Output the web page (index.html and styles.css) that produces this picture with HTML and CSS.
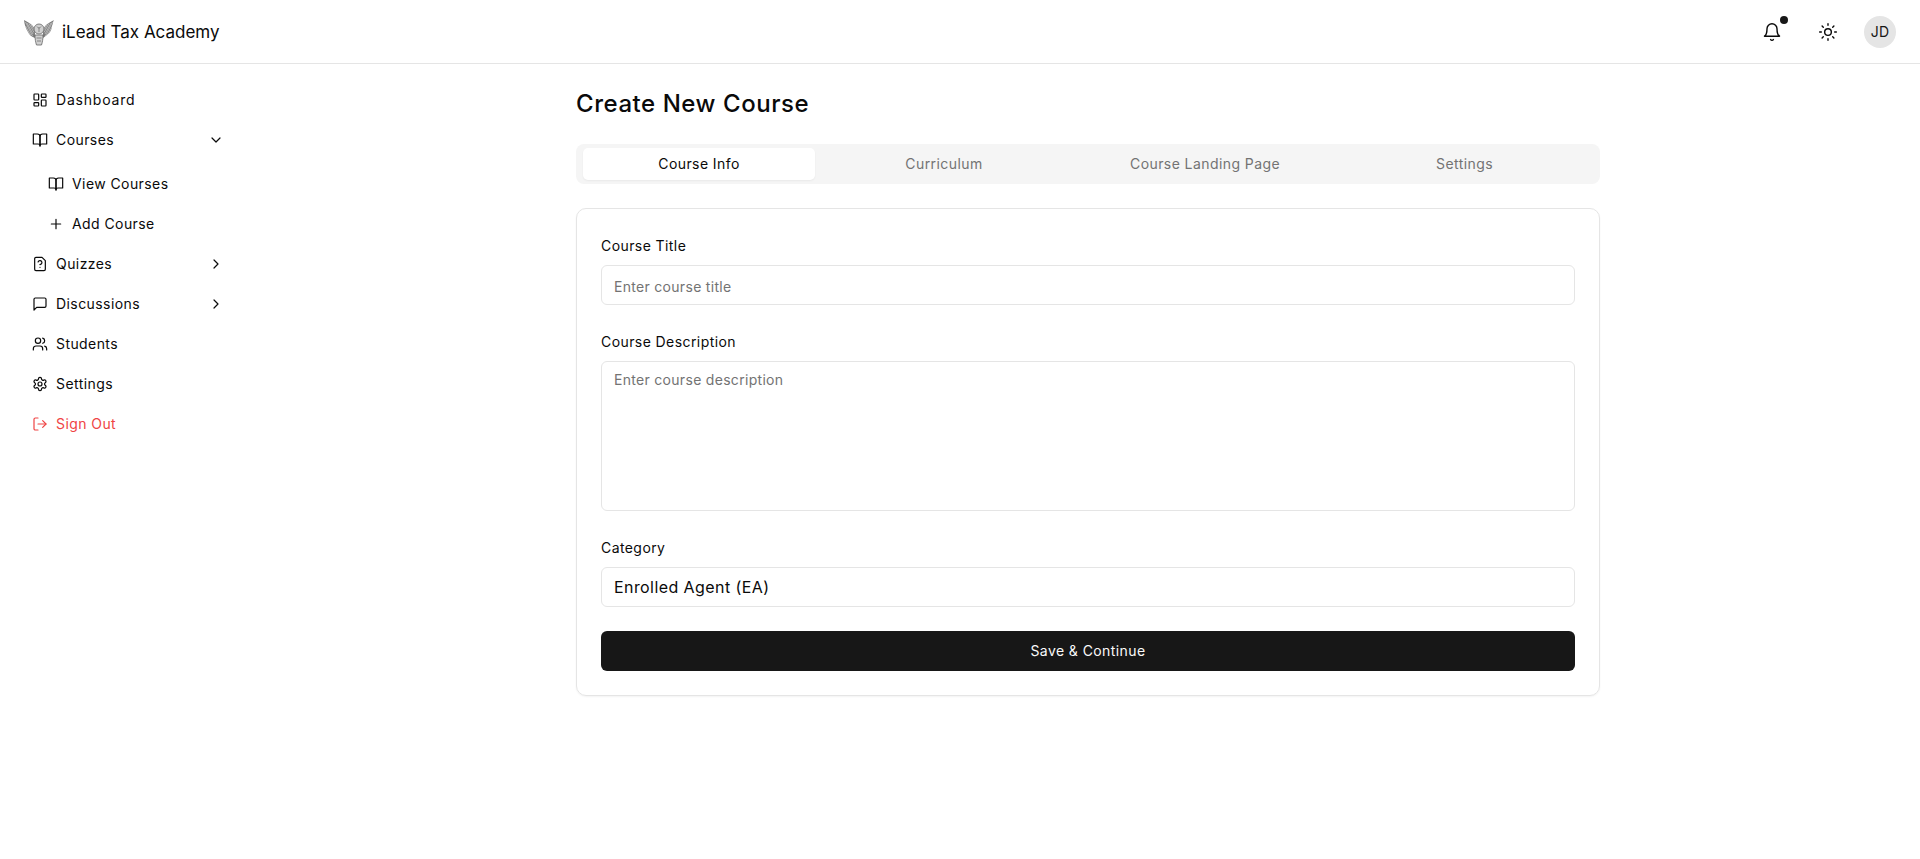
FILE: index.html
```html
<!DOCTYPE html>
<html lang="en">
<head>
<meta charset="utf-8">
<title>Create New Course</title>
<link rel="stylesheet" href="styles.css">
</head>
<body>
<header class="topbar">
  <div class="brand">
    <svg class="logo" viewBox="0 0 30 28" aria-hidden="true">
      <g fill="#7d7d7d">
        <path d="M0 2c3 2 6 3 8 5l3 4v9c-3-1-6-3-7-6C2 11 .5 7 0 2z"/>
        <path d="M30 2c-1 1-1 4-2 6 0 3-2 7-5 9l-4 3v-9l3-4c2-2 5-3 8-5z"/>
      </g>
      <g fill="none" stroke="#fff" stroke-width=".45">
        <path d="M1.500 4l7 14M3 5l6 11M5 5.500l5 9M7 6.500l4 7M1.500 8l5 9"/>
        <path d="M28.500 4l-7 14M27 5l-6 11M25 5.500l-5 9M23 6.500l-4 7M28.500 8l-5 9"/>
      </g>
      <g fill="#d0d0d0" stroke="#666" stroke-width=".8">
        <circle cx="15" cy="11" r="5"/>
        <path d="M11 17c0 4 .5 7 1.500 10h5c1-3 1.500-6 1.500-10z"/>
      </g>
      <g fill="none" stroke="#666" stroke-width=".7">
        <path d="M13 8.500c1 2 3 2 4 0M15 10v4M12.500 20h5M13 23h4"/>
      </g>
    </svg>
    <span class="brand-name">iLead Tax Academy</span>
  </div>
  <div class="top-actions">
    <button class="icon-btn bell" type="button" aria-label="Notifications">
      <svg class="ic20" viewBox="0 0 24 24"><path d="M6 8a6 6 0 0 1 12 0c0 7 3 9 3 9H3s3-2 3-9"/><path d="M10.300 21a1.940 1.940 0 0 0 3.400 0"/></svg>
      <span class="dot"></span>
    </button>
    <button class="icon-btn" type="button" aria-label="Theme">
      <svg class="ic20" viewBox="0 0 24 24"><circle cx="12" cy="12" r="4"/><path d="M12 2v2M12 20v2M4.930 4.930l1.410 1.410M17.660 17.660l1.410 1.410M2 12h2M20 12h2M6.340 17.660l-1.410 1.410M19.070 4.930l-1.410 1.410"/></svg>
    </button>
    <div class="avatar">JD</div>
  </div>
</header>
<div class="shell">
  <nav class="sidebar">
    <a class="nav-item wide"><svg class="ic" viewBox="0 0 24 24"><rect x="3" y="3" width="7" height="9" rx="1"/><rect x="14" y="3" width="7" height="5" rx="1"/><rect x="14" y="12" width="7" height="9" rx="1"/><rect x="3" y="16" width="7" height="5" rx="1"/></svg><span>Dashboard</span></a>
    <a class="nav-item"><svg class="ic" viewBox="0 0 24 24"><path d="M2 3h6a4 4 0 0 1 4 4v14a3 3 0 0 0-3-3H2z"/><path d="M22 3h-6a4 4 0 0 0-4 4v14a3 3 0 0 1 3-3h7z"/></svg><span>Courses</span><svg class="ic chev" viewBox="0 0 24 24"><path d="m6 9 6 6 6-6"/></svg></a>
    <div class="submenu">
      <a class="nav-item"><svg class="ic" viewBox="0 0 24 24"><path d="M2 3h6a4 4 0 0 1 4 4v14a3 3 0 0 0-3-3H2z"/><path d="M22 3h-6a4 4 0 0 0-4 4v14a3 3 0 0 1 3-3h7z"/></svg><span>View Courses</span></a>
      <a class="nav-item"><svg class="ic" viewBox="0 0 24 24"><path d="M5 12h14M12 5v14"/></svg><span>Add Course</span></a>
    </div>
    <a class="nav-item"><svg class="ic" viewBox="0 0 24 24"><path d="M12 17h.01"/><path d="M15 2H6a2 2 0 0 0-2 2v16a2 2 0 0 0 2 2h12a2 2 0 0 0 2-2V7z"/><path d="M9.100 9a3 3 0 0 1 5.820 1c0 2-3 3-3 3"/></svg><span>Quizzes</span><svg class="ic chev" viewBox="0 0 24 24"><path d="m9 18 6-6-6-6"/></svg></a>
    <a class="nav-item"><svg class="ic" viewBox="0 0 24 24"><path d="M21 15a2 2 0 0 1-2 2H7l-4 4V5a2 2 0 0 1 2-2h14a2 2 0 0 1 2 2z"/></svg><span>Discussions</span><svg class="ic chev" viewBox="0 0 24 24"><path d="m9 18 6-6-6-6"/></svg></a>
    <a class="nav-item"><svg class="ic" viewBox="0 0 24 24"><path d="M16 21v-2a4 4 0 0 0-4-4H6a4 4 0 0 0-4 4v2"/><circle cx="9" cy="7" r="4"/><path d="M22 21v-2a4 4 0 0 0-3-3.870"/><path d="M16 3.130a4 4 0 0 1 0 7.750"/></svg><span>Students</span></a>
    <a class="nav-item"><svg class="ic" viewBox="0 0 24 24"><path d="M12.220 2h-.44a2 2 0 0 0-2 2v.18a2 2 0 0 1-1 1.730l-.43.25a2 2 0 0 1-2 0l-.15-.08a2 2 0 0 0-2.730.73l-.22.38a2 2 0 0 0 .73 2.730l.15.1a2 2 0 0 1 1 1.720v.51a2 2 0 0 1-1 1.740l-.15.09a2 2 0 0 0-.73 2.730l.22.38a2 2 0 0 0 2.730.73l.15-.08a2 2 0 0 1 2 0l.43.25a2 2 0 0 1 1 1.730V20a2 2 0 0 0 2 2h.44a2 2 0 0 0 2-2v-.18a2 2 0 0 1 1-1.730l.43-.25a2 2 0 0 1 2 0l.15.08a2 2 0 0 0 2.730-.73l.22-.39a2 2 0 0 0-.73-2.730l-.15-.08a2 2 0 0 1-1-1.740v-.5a2 2 0 0 1 1-1.740l.15-.09a2 2 0 0 0 .73-2.730l-.22-.38a2 2 0 0 0-2.730-.73l-.15.08a2 2 0 0 1-2 0l-.43-.25a2 2 0 0 1-1-1.730V4a2 2 0 0 0-2-2z"/><circle cx="12" cy="12" r="3"/></svg><span>Settings</span></a>
    <a class="nav-item danger"><svg class="ic" viewBox="0 0 24 24"><path d="M9 21H5a2 2 0 0 1-2-2V5a2 2 0 0 1 2-2h4"/><path d="m16 17 5-5-5-5"/><path d="M21 12H9"/></svg><span>Sign Out</span></a>
  </nav>
  <main class="main">
    <div class="content">
      <h1 class="title">Create New Course</h1>
      <div class="tabs">
        <div class="tab active">Course Info</div>
        <div class="tab">Curriculum</div>
        <div class="tab">Course Landing Page</div>
        <div class="tab">Settings</div>
      </div>
      <form class="card">
        <div class="field">
          <label class="label">Course Title</label>
          <input class="control" type="text" placeholder="Enter course title">
        </div>
        <div class="field">
          <label class="label">Course Description</label>
          <textarea class="control area" placeholder="Enter course description"></textarea>
        </div>
        <div class="field">
          <label class="label">Category</label>
          <select class="control select"><option>Enrolled Agent (EA)</option></select>
        </div>
        <button class="save" type="button">Save &amp; Continue</button>
      </form>
    </div>
  </main>
</div>
</body>
</html>
```
FILE: styles.css
```css
* { box-sizing: border-box; }
html, body { margin: 0; height: 100%; }
body {
  font-family: Inter, "Noto Sans", sans-serif;
  color: #0a0a0a;
  background: #fff;
  font-size: 14px;
  letter-spacing: .42px;
}
.topbar {
  height: 64px;
  border-bottom: 1px solid #e5e5e5;
  display: flex;
  align-items: center;
  justify-content: space-between;
  padding: 0 24px;
}
.brand { display: flex; align-items: center; gap: 8px; }
.logo { width: 30px; height: 28px; display: block; }
.brand-name { font-size: 17px; font-weight: 400; line-height: 28px; letter-spacing: 0; }
.top-actions { display: flex; align-items: center; gap: 16px; }
.icon-btn {
  width: 40px;
  height: 40px;
  border: 0;
  background: none;
  padding: 0;
  display: flex;
  align-items: center;
  justify-content: center;
  position: relative;
  color: #0a0a0a;
}
.ic20 { width: 20px; height: 20px; fill: none; stroke: currentColor; stroke-width: 1.700; stroke-linecap: round; stroke-linejoin: round; }
.dot { position: absolute; width: 8px; height: 8px; border-radius: 50%; background: #171717; top: 4px; right: 4px; }
.avatar {
  width: 32px;
  height: 32px;
  border-radius: 50%;
  background: #e5e5e5;
  display: flex;
  align-items: center;
  justify-content: center;
  font-size: 14px;
  font-weight: 400;
  letter-spacing: .2px;
  color: #171717;
}
.shell { display: flex; }
.sidebar { width: 256px; flex: none; padding: 16px; }
.nav-item {
  height: 40px;
  display: flex;
  align-items: center;
  gap: 8px;
  padding: 0 16px;
  font-weight: 400;
  color: #0a0a0a;
}
.nav-item span { padding-bottom: 2px; }
.wide { letter-spacing: .8px; }
.ic { width: 16px; height: 16px; flex: none; fill: none; stroke: currentColor; stroke-width: 1.800; stroke-linecap: round; stroke-linejoin: round; }
.chev { margin-left: auto; }
.submenu { padding: 4px 0 0 16px; }
.danger { color: #ef4444; }
.main { flex: 1; padding: 24px 0; }
.content { width: 1024px; margin: 0 auto; }
.title { margin: 0 0 24px; font-size: 24px; line-height: 32px; font-weight: 500; letter-spacing: .55px; }
.tabs {
  height: 40px;
  background: #f5f5f5;
  border-radius: 8px;
  padding: 4px 8px 4px 7px;
  display: grid;
  grid-template-columns: 232px 258px 264px 1fr;
  margin-bottom: 24px;
}
.tab {
  display: flex;
  align-items: center;
  justify-content: center;
  border-radius: 5px;
  padding-bottom: 2px;
  font-weight: 400;
  color: #737373;
}
.tab.active { background: #fff; color: #0a0a0a; box-shadow: 0 1px 2px rgba(0,0,0,.05); }
.card {
  border: 1px solid #e5e5e5;
  border-radius: 10px;
  padding: 24px;
  box-shadow: 0 1px 2px rgba(0,0,0,.05);
  display: flex;
  flex-direction: column;
  gap: 24px;
}
.field { display: flex; flex-direction: column; gap: 8px; }
.label { font-weight: 400; line-height: 26px; height: 24px; }
.control {
  display: block;
  width: 100%;
  height: 40px;
  border: 1px solid #e5e5e5;
  border-radius: 6px;
  padding: 2px 12px 0;
  font: inherit;
  letter-spacing: .3px;
  color: #0a0a0a;
  background: #fff;
  outline: none;
}
.control::placeholder { color: #737373; opacity: 1; }
.area { height: 150px; padding: 8px 12px; resize: none; line-height: 20px; }
.select { appearance: none; padding-top: 0; font-size: 16px; font-weight: 400; letter-spacing: .42px; }
.save {
  height: 40px;
  border: 0;
  border-radius: 6px;
  background: #171717;
  color: #fafafa;
  font: inherit;
  font-weight: 400;
  letter-spacing: .42px;
  padding: 0 0 2px;
}
```
